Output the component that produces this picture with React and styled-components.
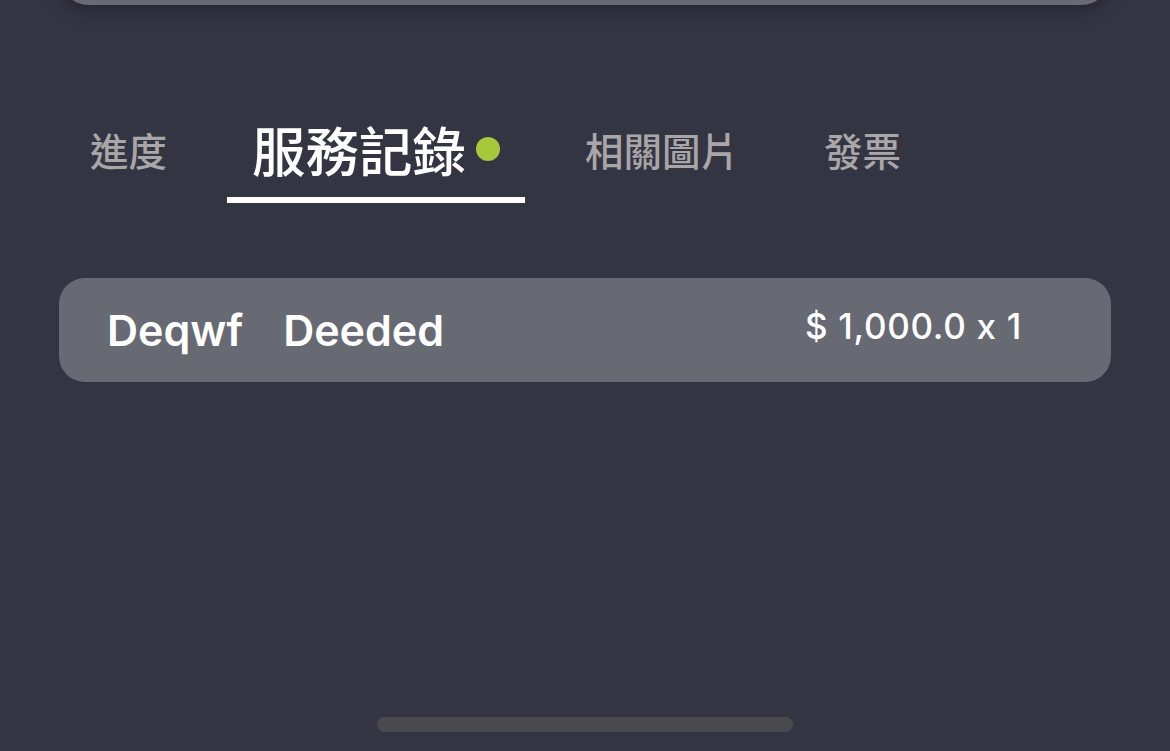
import React, { useState } from "react";
import styled, { createGlobalStyle } from "styled-components";

const GlobalStyle = createGlobalStyle`
  html, body {
    margin: 0;
    padding: 0;
    background: #343543;
    overflow: hidden;
  }
  * { box-sizing: border-box; }
`;

const tabs = ["進度", "服務記錄", "相關圖片", "發票"];

const records = [{ id: 1, code: "Deqwf", name: "Deeded", price: "$ 1,000.0", qty: 1 }];

const Page = styled.div`
  min-height: 100vh;
  padding: 0 59px;
  background: #343543;
  font-family: Inter, "Noto Sans CJK TC", sans-serif;
`;

const TopCard = styled.div`
  height: 60px;
  margin-top: -55px;
  border-radius: 30px;
  background: #686a74;
  box-shadow: 0 6px 18px rgba(0, 0, 0, 0.28);
`;

const TabBar = styled.div`
  display: flex;
  gap: 35px;
  margin-top: 96px;
  padding-left: 6px;
`;

const Tab = styled.div`
  display: flex;
  align-items: center;
  height: 102px;
  padding: 0 25px;
  border-bottom: 6px solid ${(p) => (p.$active ? "#ffffff" : "transparent")};
  color: ${(p) => (p.$active ? "#ffffff" : "#a9a6a7")};
  font-family: "Noto Sans CJK TC", sans-serif;
  font-size: ${(p) => (p.$active ? "53.5px" : "38.5px")};
  font-weight: 500;
  line-height: 1;
  cursor: pointer;
`;

const Dot = styled.span`
  width: 24px;
  height: 24px;
  margin-left: 10px;
  border-radius: 50%;
  background: #a8c83b;
`;

const List = styled.div`
  margin-top: 75px;
  display: flex;
  flex-direction: column;
  gap: 20px;
`;

const Row = styled.div`
  display: flex;
  align-items: center;
  height: 104px;
  padding: 0 89px 0 48px;
  border-radius: 26px;
  background: #676973;
  color: #ffffff;
`;

const Title = styled.span`
  font-size: 43px;
  font-weight: 600;
  margin-right: 40px;
`;

const Price = styled.span`
  margin-left: auto;
  margin-top: -8px;
  font-size: 35px;
  font-weight: 500;
  letter-spacing: 0.7px;
`;

const HomeBar = styled.div`
  position: fixed;
  left: 50%;
  bottom: 19px;
  width: 416px;
  height: 15px;
  margin-left: -208px;
  border-radius: 8px;
  background: #4a4a4c;
`;

export default function App() {
  const [active, setActive] = useState(1);
  return (
    <Page>
      <GlobalStyle />
      <TopCard />
      <TabBar>
        {tabs.map((t, i) => (
          <Tab key={t} $active={i === active} onClick={() => setActive(i)}>
            {t}
            {i === active && <Dot />}
          </Tab>
        ))}
      </TabBar>
      <List>
        {records.map((r) => (
          <Row key={r.id}>
            <Title>{r.code}</Title>
            <Title>{r.name}</Title>
            <Price>
              {r.price} x {r.qty}
            </Price>
          </Row>
        ))}
      </List>
      <HomeBar />
    </Page>
  );
}
